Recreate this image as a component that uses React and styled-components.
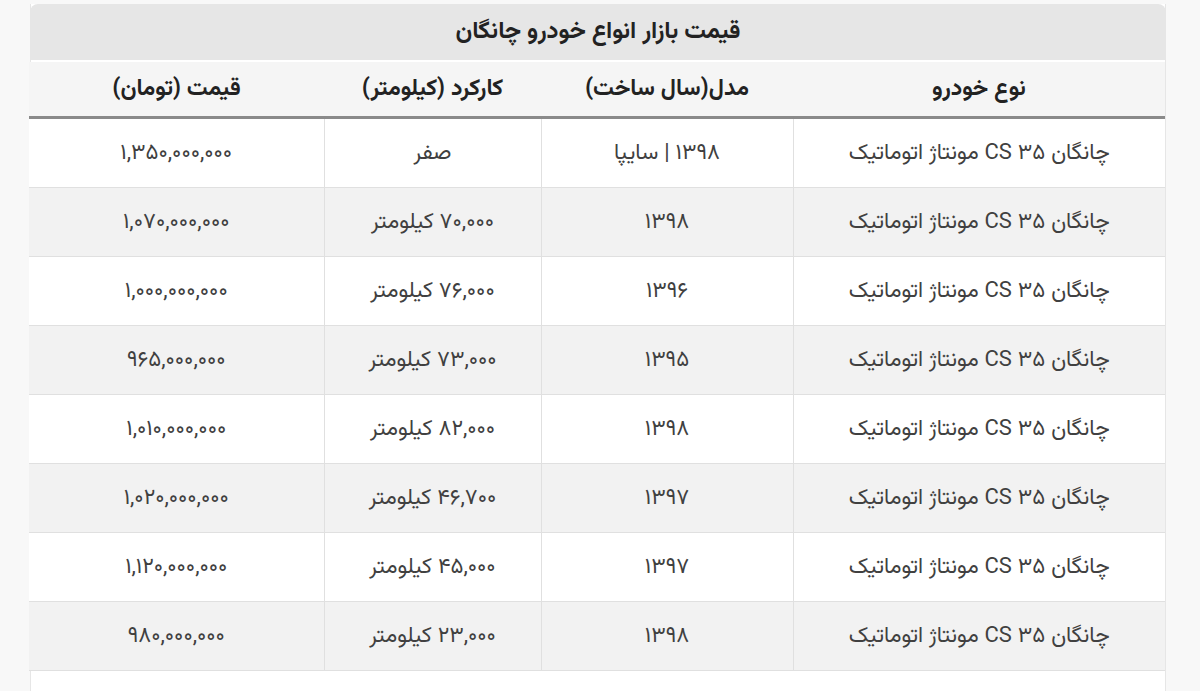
import React from 'react'
import styled, { createGlobalStyle } from 'styled-components'

const GlobalStyle = createGlobalStyle`
  html, body {
    margin: 0;
    padding: 0;
    background: #f8f8f8;
  }
  body {
    font-family: "Vazirmatn", "Noto Sans Arabic", "DejaVu Sans", sans-serif;
    color: #333;
  }
`

const Page = styled.div`
  padding: 4px 34px 0 30px;
  height: 691px;
  box-sizing: border-box;
  overflow: hidden;
`

const Card = styled.div`
  direction: rtl;
  width: 1136px;
  background: #fff;
  border-left: 1px solid #e6e6e6;
  border-right: 1px solid #e6e6e6;
  min-height: 700px;
  box-sizing: border-box;
`

const Caption = styled.div`
  height: 56px;
  display: flex;
  align-items: center;
  justify-content: center;
  background: #e6e6e6;
  border-radius: 8px 8px 0 0;
  font-weight: bold;
  font-size: 24px;
  color: #222;
  margin: 0 -1px 2px;
`

const Table = styled.table`
  width: 100%;
  border-collapse: collapse;
  table-layout: fixed;
`

const HeadCell = styled.th`
  height: 54px;
  padding: 0;
  background: #f5f5f5;
  border-bottom: 3px solid #8a8a8a;
  font-size: 23px;
  font-weight: bold;
  color: #222;
  text-align: center;
  width: ${p => p.$w}px;
`

const Row = styled.tr`
  background: ${p => (p.$odd ? '#f2f2f2' : '#fff')};
`

const Cell = styled.td`
  height: 68px;
  padding: 0;
  border-bottom: 1px solid #e0e0e0;
  border-left: 1px solid #e0e0e0;
  font-size: 22px;
  color: #404040;
  text-align: center;
  &:last-child {
    border-left: none;
  }
`

const CAR = 'چانگان CS ۳۵ مونتاژ اتوماتیک'

const ROWS = [
  ['۱۳۹۸ | سایپا', 'صفر', '۱,۳۵۰,۰۰۰,۰۰۰'],
  ['۱۳۹۸', '۷۰,۰۰۰ کیلومتر', '۱,۰۷۰,۰۰۰,۰۰۰'],
  ['۱۳۹۶', '۷۶,۰۰۰ کیلومتر', '۱,۰۰۰,۰۰۰,۰۰۰'],
  ['۱۳۹۵', '۷۳,۰۰۰ کیلومتر', '۹۶۵,۰۰۰,۰۰۰'],
  ['۱۳۹۸', '۸۲,۰۰۰ کیلومتر', '۱,۰۱۰,۰۰۰,۰۰۰'],
  ['۱۳۹۷', '۴۶,۷۰۰ کیلومتر', '۱,۰۲۰,۰۰۰,۰۰۰'],
  ['۱۳۹۷', '۴۵,۰۰۰ کیلومتر', '۱,۱۲۰,۰۰۰,۰۰۰'],
  ['۱۳۹۸', '۲۳,۰۰۰ کیلومتر', '۹۸۰,۰۰۰,۰۰۰'],
]

const HEADS = [
  ['نوع خودرو', 372],
  ['مدل(سال ساخت)', 252],
  ['کارکرد (کیلومتر)', 217],
  ['قیمت (تومان)', 295],
]

export default function App() {
  return (
    <Page>
      <GlobalStyle />
      <Card>
        <Caption>قیمت بازار انواع خودرو چانگان</Caption>
        <Table>
          <thead>
            <tr>
              {HEADS.map(([t, w]) => (
                <HeadCell key={t} $w={w}>{t}</HeadCell>
              ))}
            </tr>
          </thead>
          <tbody>
            {ROWS.map((r, i) => (
              <Row key={i} $odd={i % 2 === 1}>
                <Cell>{CAR}</Cell>
                <Cell>{r[0]}</Cell>
                <Cell>{r[1]}</Cell>
                <Cell>{r[2]}</Cell>
              </Row>
            ))}
          </tbody>
        </Table>
      </Card>
    </Page>
  )
}
